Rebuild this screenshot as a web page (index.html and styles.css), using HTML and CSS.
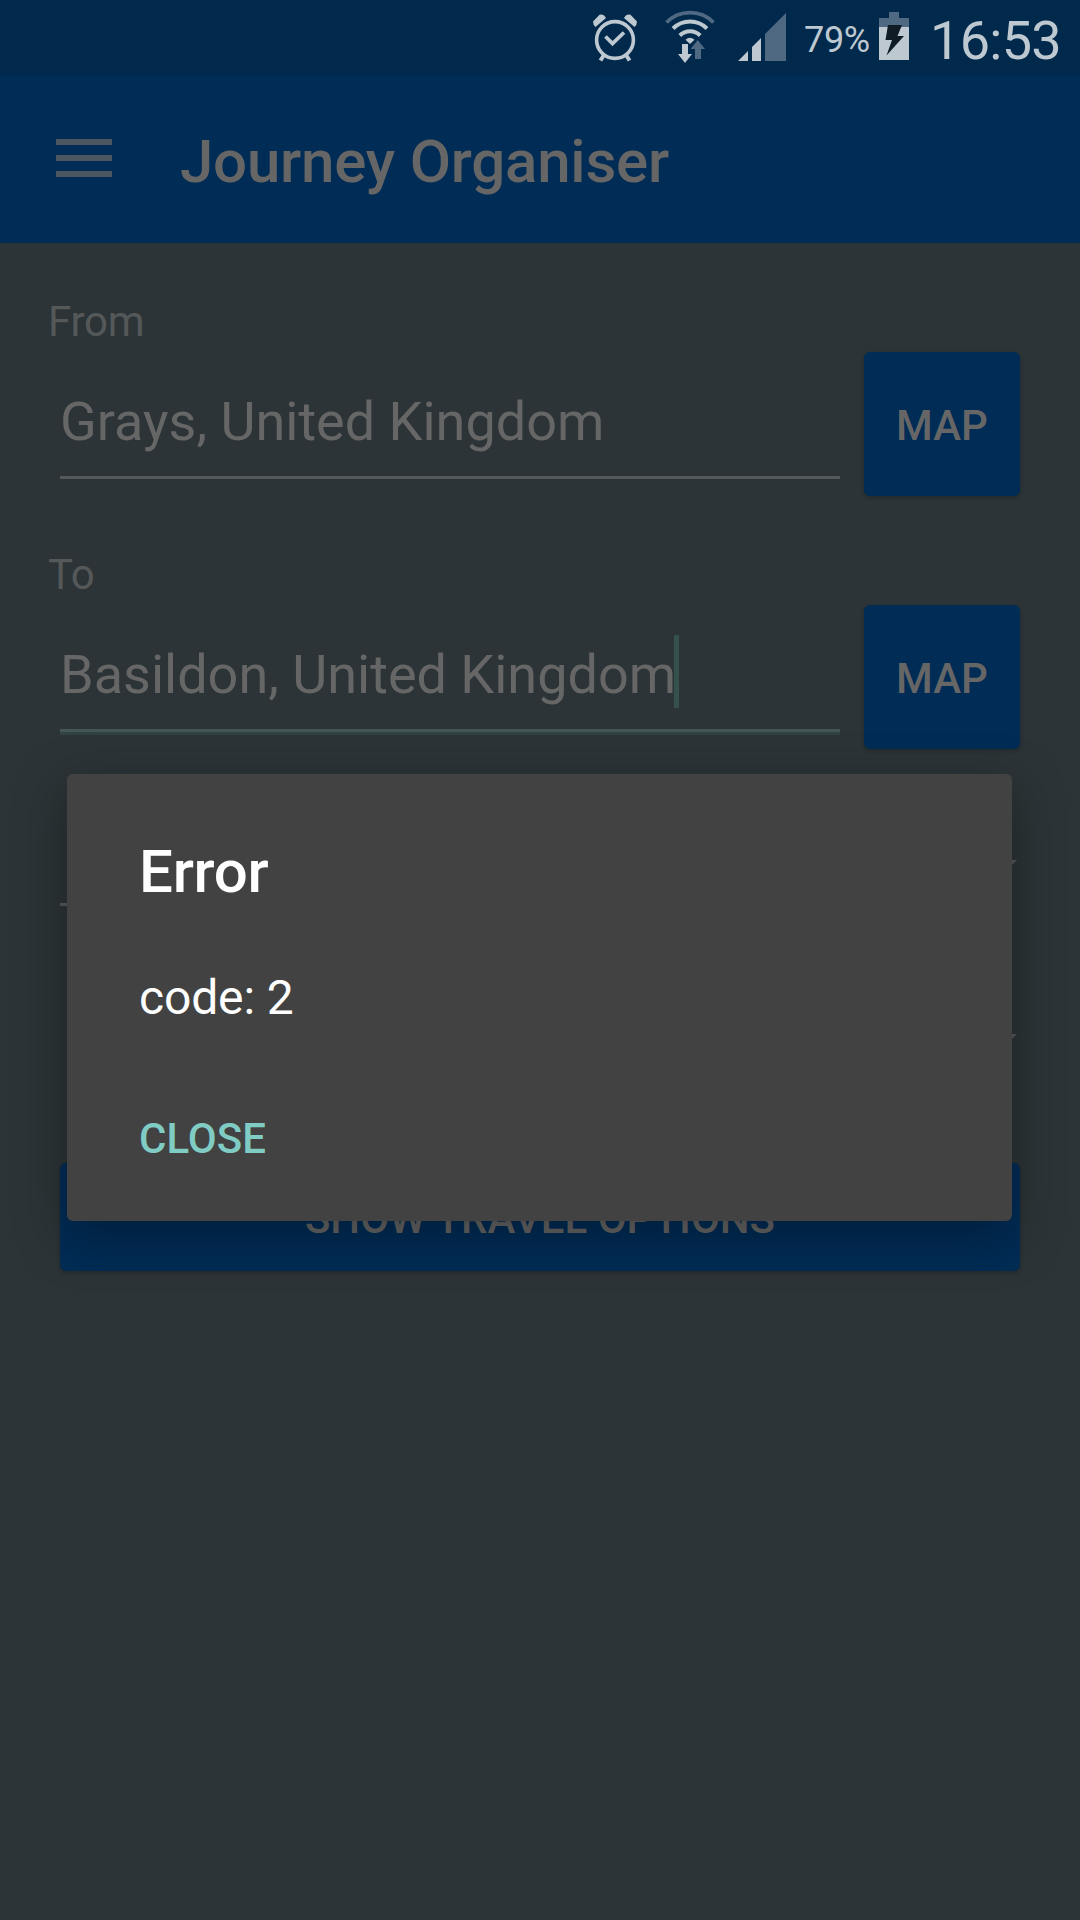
FILE: index.html
```html
<!DOCTYPE html>
<html lang="en">
<head>
<meta charset="utf-8">
<title>Journey Organiser</title>
<link rel="stylesheet" href="styles.css">
</head>
<body>
<div class="screen">
  <div class="status">
    <svg class="alarm" width="46" height="50" viewBox="0 0 46 50" fill="none" stroke="#bdc8d0">
      <circle cx="23" cy="27" r="18.4" stroke-width="3.6"/>
      <path d="M3.500 14Q1 12 1 8.500L7.500 1.800Q11.500.500 14 5zM42.500 14Q45 12 45 8.500L38.500 1.800Q34.500.500 32 5z" fill="#bdc8d0" stroke="none"/>
      <path d="m13.5 23.500 7 7L32 19.500" stroke-width="3.800"/>
      <path d="m12 42-3.600 5.500M34 42l3.600 5.500" stroke-width="4"/>
    </svg>
    <svg class="wifi" width="50" height="54" viewBox="0 0 50 54" fill="none">
      <path d="M1.5 13.5a33 33 0 0 1 47 0" stroke="#4f6983" stroke-width="3.7"/>
      <path d="M8 19.5a24 24 0 0 1 34 0M14.8 26.5a14.5 14.5 0 0 1 20.4 0" stroke="#bdc8d0" stroke-width="4"/>
      <path d="M20.5 30.7q4.5-3.8 9 0L25 35z" fill="#bdc8d0"/>
      <path d="M30 50V40h-4.500l7.200-9 7.300 9h-4v10z" fill="#4f6983"/>
      <path d="M17 35h6v10h4l-7 9-7-9h4z" fill="#bdc8d0"/>
    </svg>
    <svg class="signal" width="48" height="48" viewBox="0 0 48 48">
      <path d="M0 48 10 38v10zM14 34l9-9v23h-9z" fill="#bdc8d0"/>
      <path d="M27 21 48 0v48H27z" fill="#4f6983"/>
    </svg>
    <span class="percent">79%</span>
    <svg class="battery" width="30" height="48" viewBox="0 0 30 48">
      <path d="M10 0h10v6h10v9H0V6h10z" fill="#4f6983"/>
      <path d="M0 15h30v33H0z" fill="#bdc8d0"/>
      <path d="M9 13h14l-4.500 11H25L7.500 43.500 13 28H6.500z" fill="#101c25"/>
    </svg>
    <span class="clock">16:53</span>
  </div>
  <header class="toolbar">
    <div class="menu"><i></i><i></i><i></i></div>
    <h1>Journey Organiser</h1>
  </header>
  <main>
    <section class="group">
      <label>From</label>
      <div class="row">
        <div class="field">Grays, United Kingdom</div>
        <button class="map">MAP</button>
      </div>
    </section>
    <section class="group">
      <label>To</label>
      <div class="row">
        <div class="field focused">Basildon, United Kingdom<i class="caret"></i></div>
        <button class="map">MAP</button>
      </div>
    </section>
    <div class="spinner lined"><i class="arrow"></i></div>
    <div class="spinner"><i class="arrow"></i></div>
    <button class="show">SHOW TRAVEL OPTIONS</button>
  </main>
  <div class="dialog">
    <h2>Error</h2>
    <p>code: 2</p>
    <button class="close">CLOSE</button>
  </div>
</div>
</body>
</html>
```
FILE: styles.css
```css
* { box-sizing: border-box; }
body { margin: 0; }
h1, h2, p { margin: 0; font-weight: 400; }
button { border: 0; padding: 0; font: 500 42px Roboto, sans-serif; background: none; }
svg, i { display: block; flex: none; }

.screen {
  position: relative;
  width: 1080px;
  height: 1920px;
  overflow: hidden;
  background: #2c3437;
  color: #666;
  font-family: Roboto, sans-serif;
}

.status {
  display: flex;
  align-items: flex-start;
  height: 75px;
  padding-left: 592px;
  background: #00294b;
  color: #bdc8d0;
  white-space: nowrap;
}
.alarm { margin-top: 13px; }
.wifi { margin: 9px 0 0 27px; }
.signal { margin: 13px 0 0 23px; }
.percent { width: 75px; margin: 19px 0 0 18px; font-size: 36px; line-height: 42px; letter-spacing: -.3px; }
.battery { margin-top: 12px; }
.clock { margin: 9px 0 0 21px; font-size: 54px; line-height: 64px; letter-spacing: -.7px; }

.toolbar {
  display: flex;
  align-items: center;
  gap: 68px;
  height: 168px;
  padding-left: 56px;
  background: #002c55;
}
.menu { display: flex; flex-direction: column; gap: 10px; padding-bottom: 2px; }
.menu i { width: 56px; height: 6px; background: #4c5661; }
.toolbar h1 { padding-top: 5px; font-size: 60px; font-weight: 500; line-height: 70px; letter-spacing: -.22px; }

main { display: flex; flex-direction: column; padding: 54px 60px 0; }
.group { display: flex; flex-direction: column; height: 253px; }
label { margin-left: -12px; font-size: 42px; line-height: 49px; letter-spacing: -.2px; color: #555858; }
.row { display: flex; justify-content: space-between; align-items: flex-start; margin-top: 6px; }
.field {
  display: flex;
  width: 780px;
  height: 127px;
  padding-top: 20px;
  border-bottom: 3px solid #555959;
  font-size: 54px;
  line-height: 99px;
  white-space: nowrap;
}
.focused { border-color: #455755; box-shadow: 0 3px #2f4344; }
.caret { width: 5px; height: 73px; margin: 10px 0 0 -2px; background: #34514e; }
.map, .show { border-radius: 6px; background: #002c55; color: #666; box-shadow: 0 2px 4px rgba(0, 0, 0, .2); }
.map { width: 156px; height: 144px; padding-top: 3px; }
.spinner { display: flex; justify-content: flex-end; height: 174px; padding: 57px 3px 0 0; }
.lined {
  height: 103px;
  margin-bottom: 71px;
  background: linear-gradient(#555959, #555959) left bottom / 780px 3px no-repeat;
}
.arrow { width: 30px; height: 15px; background: #54595b; clip-path: polygon(0 0, 100% 0, 50% 100%); }
.show { height: 108px; margin-top: 12px; padding-top: 3px; }

.dialog {
  position: absolute;
  left: 67px;
  top: 774px;
  display: flex;
  flex-direction: column;
  align-items: flex-start;
  width: 945px;
  height: 447px;
  padding: 63px 72px 0;
  border-radius: 6px;
  background: #424242;
  color: #fff;
  box-shadow: 0 14px 52px rgba(0, 0, 0, .34);
}
.dialog h2 { font-size: 60px; font-weight: 500; line-height: 70px; letter-spacing: -.25px; }
.dialog p { margin-top: 63px; font-size: 48px; line-height: 56px; letter-spacing: -.15px; }
.close { margin-top: 88px; line-height: 50px; color: #80cbc4; }
```
